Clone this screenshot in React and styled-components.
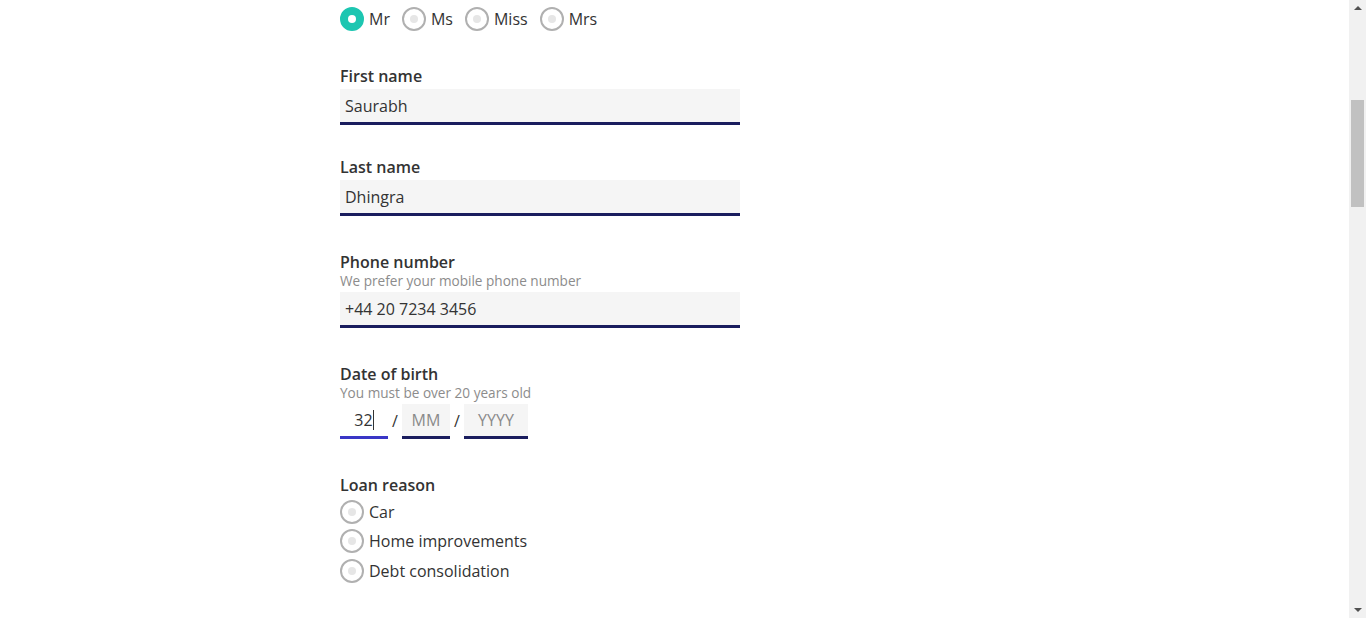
import React from "react";
import styled, { createGlobalStyle } from "styled-components";

const GlobalStyle = createGlobalStyle`
  body {
    margin: 0;
    background: #fff;
    font-family: "Open Sans", "Liberation Sans", sans-serif;
    color: #333;
  }
`;

const TITLES = ["Mr", "Ms", "Miss", "Mrs"];
const REASONS = ["Car", "Home improvements", "Debt consolidation"];

const Page = () => (
  <>
    <GlobalStyle />
    <PageWrapper>
      <Form>
        <TitleRow>
          {TITLES.map((t, i) => (
            <RadioOption key={t}>
              <RadioCircle $checked={i === 0} />
              <RadioText>{t}</RadioText>
            </RadioOption>
          ))}
        </TitleRow>

        <Field $gap={34}>
          <Label>First name</Label>
          <TextInput readOnly value="Saurabh" />
        </Field>

        <Field $gap={31}>
          <Label>Last name</Label>
          <TextInput readOnly value="Dhingra" />
        </Field>

        <Field $gap={35}>
          <Label>Phone number</Label>
          <Hint>We prefer your mobile phone number</Hint>
          <TextInput readOnly value="+44 20 7234 3456" />
        </Field>

        <Field $gap={35}>
          <Label>Date of birth</Label>
          <Hint>You must be over 20 years old</Hint>
          <DateRow>
            <DatePart $width={48} $focused>
              32
              <Caret />
            </DatePart>
            <Slash>/</Slash>
            <DatePart $width={48} $placeholder>
              MM
            </DatePart>
            <Slash>/</Slash>
            <DatePart $width={64} $placeholder>
              YYYY
            </DatePart>
          </DateRow>
        </Field>

        <Field $gap={35}>
          <Label>Loan reason</Label>
          <ReasonList>
            {REASONS.map((r) => (
              <RadioOption key={r} $row>
                <RadioCircle />
                <RadioText>{r}</RadioText>
              </RadioOption>
            ))}
          </ReasonList>
        </Field>
      </Form>
    </PageWrapper>
    <ScrollTrack>
      <ArrowUp />
      <Thumb />
      <ArrowDown />
    </ScrollTrack>
  </>
);

const PageWrapper = styled.div`
  padding: 7px 0 0 340px;
  box-sizing: border-box;
  height: 618px;
  overflow: hidden;
`;

const Form = styled.div`
  width: 400px;
  display: flex;
  flex-direction: column;
`;

const TitleRow = styled.div`
  display: flex;
  align-items: center;
  gap: 12px;
  height: 24px;
`;

const RadioOption = styled.label`
  display: flex;
  align-items: center;
  gap: 5px;
  height: ${(p) => (p.$row ? "29.5px" : "24px")};
`;

const RadioCircle = styled.span`
  width: 24px;
  height: 24px;
  box-sizing: border-box;
  border-radius: 50%;
  border: 2px solid ${(p) => (p.$checked ? "#1dc6b1" : "#b0b0b0")};
  background: ${(p) => (p.$checked ? "#1dc6b1" : "#fff")};
  display: flex;
  align-items: center;
  justify-content: center;
  flex-shrink: 0;

  &::after {
    content: "";
    width: 8px;
    height: 8px;
    border-radius: 50%;
    background: ${(p) => (p.$checked ? "#fff" : "#e6e6e6")};
  }
`;

const RadioText = styled.span`
  font-size: 16px;
  line-height: 22px;
  color: #333;
`;

const Field = styled.div`
  display: flex;
  flex-direction: column;
  margin-top: ${(p) => p.$gap}px;
`;

const Label = styled.div`
  font-size: 16px;
  font-weight: 600;
  line-height: 22px;
  color: #333;
  margin-bottom: 2px;
`;

const Hint = styled.div`
  font-size: 13.6px;
  line-height: 19px;
  color: #8c8c8c;
  margin-top: -4px;
  margin-bottom: 2px;
`;

const TextInput = styled.input`
  width: 100%;
  height: 36px;
  box-sizing: border-box;
  border: none;
  border-bottom: 3px solid #1a1d5e;
  background: #f5f5f5;
  padding: 0 5px;
  font-family: inherit;
  font-size: 16px;
  color: #333;
  outline: none;
`;

const DateRow = styled.div`
  display: flex;
  align-items: center;
`;

const DatePart = styled.div`
  width: ${(p) => p.$width}px;
  height: 35px;
  box-sizing: border-box;
  border-bottom: 3px solid ${(p) => (p.$focused ? "#3a36c6" : "#1a1d5e")};
  background: ${(p) => (p.$focused ? "#fff" : "#f5f5f5")};
  color: ${(p) => (p.$placeholder ? "#8a8a8a" : "#333")};
  font-size: 16px;
  display: flex;
  align-items: center;
  justify-content: center;
`;

const Caret = styled.span`
  width: 1px;
  height: 20px;
  background: #333;
`;

const Slash = styled.span`
  width: 14px;
  text-align: center;
  font-size: 16px;
  color: #333;
  margin-top: -2px;
`;

const ReasonList = styled.div`
  display: flex;
  flex-direction: column;
  margin-top: -1px;
`;

const ScrollTrack = styled.div`
  position: fixed;
  top: 0;
  right: 0;
  width: 17px;
  height: 100%;
  background: #f1f1f1;
  display: flex;
  flex-direction: column;
  align-items: center;
`;

const ArrowUp = styled.span`
  margin-top: 6px;
  width: 0;
  height: 0;
  border-left: 4px solid transparent;
  border-right: 4px solid transparent;
  border-bottom: 4px solid #505050;
`;

const Thumb = styled.span`
  margin-top: 90px;
  width: 13px;
  height: 107px;
  background: #c1c1c1;
`;

const ArrowDown = styled.span`
  margin-top: auto;
  margin-bottom: 6px;
  width: 0;
  height: 0;
  border-left: 4px solid transparent;
  border-right: 4px solid transparent;
  border-top: 4px solid #505050;
`;

export default Page;
